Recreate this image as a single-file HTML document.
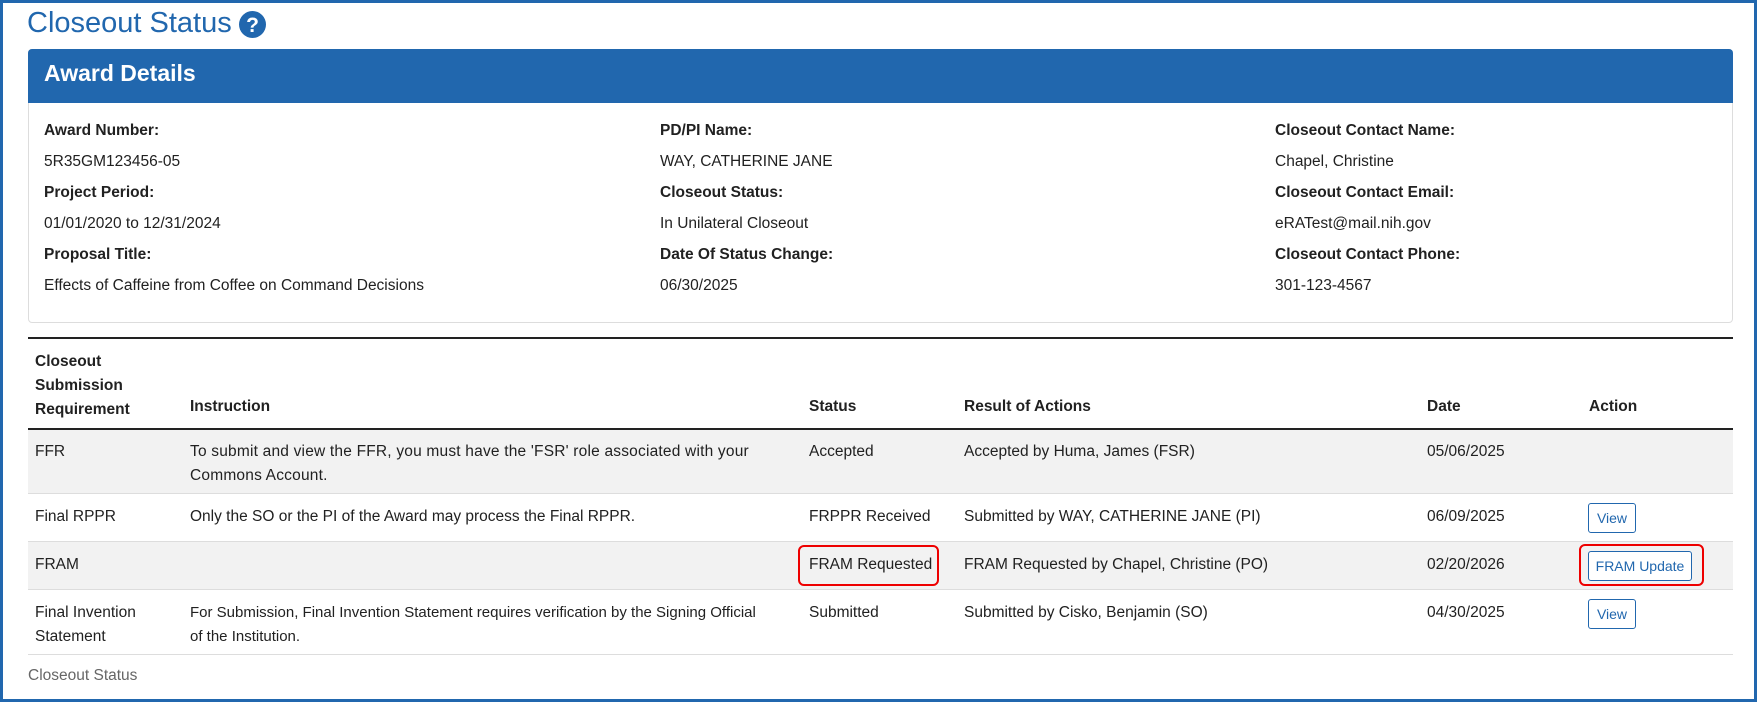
<!DOCTYPE html>
<html><head><meta charset="utf-8"><style>
*{box-sizing:border-box;margin:0;padding:0}
body{width:1757px;height:702px;overflow:hidden;background:#fff;font-family:"Liberation Sans",sans-serif;color:#212121;font-size:15.5px;position:relative}
.frame{position:absolute;left:0;top:0;width:1757px;height:702px;border:3px solid #2167ae}
.a{position:absolute;white-space:nowrap}
.b{font-weight:bold}
.row{position:absolute;left:28px;width:1705px}
.btn{position:absolute;border:1px solid #2167ae;border-radius:3px;color:#2167ae;font-size:14px;text-align:center;background:#fff}
.red{position:absolute;border:2.5px solid #e00;border-radius:6px}
</style></head><body>
<div class="frame"></div>
<div class="a" style="left:27px;top:7px;font-size:29px;color:#2167ae">Closeout Status</div>
<svg class="a" style="left:239px;top:11px" width="27" height="27" viewBox="0 0 27 27"><circle cx="13.5" cy="13.5" r="13.5" fill="#2167ae"/><text x="13.5" y="21" text-anchor="middle" font-family="Liberation Sans" font-weight="bold" font-size="21" fill="#fff">?</text></svg>
<div class="a" style="left:28px;top:49px;width:1705px;height:274px;border:1px solid #ddd;border-radius:4px"></div>
<div class="a" style="left:28px;top:49px;width:1705px;height:54px;background:#2167ae;border-radius:4px 4px 0 0"></div>
<div class="a b" style="left:44px;top:60px;font-size:23px;color:#fff">Award Details</div>

<div class="a b" style="left:44px;top:122px">Award Number:</div>
<div class="a" style="left:44px;top:153px">5R35GM123456-05</div>
<div class="a b" style="left:44px;top:184px">Project Period:</div>
<div class="a" style="left:44px;top:215px">01/01/2020 to 12/31/2024</div>
<div class="a b" style="left:44px;top:246px">Proposal Title:</div>
<div class="a" style="left:44px;top:277px">Effects of Caffeine from Coffee on Command Decisions</div>

<div class="a b" style="left:660px;top:122px">PD/PI Name:</div>
<div class="a" style="left:660px;top:153px">WAY, CATHERINE JANE</div>
<div class="a b" style="left:660px;top:184px">Closeout Status:</div>
<div class="a" style="left:660px;top:215px">In Unilateral Closeout</div>
<div class="a b" style="left:660px;top:246px">Date Of Status Change:</div>
<div class="a" style="left:660px;top:277px">06/30/2025</div>

<div class="a b" style="left:1275px;top:122px">Closeout Contact Name:</div>
<div class="a" style="left:1275px;top:153px">Chapel, Christine</div>
<div class="a b" style="left:1275px;top:184px">Closeout Contact Email:</div>
<div class="a" style="left:1275px;top:215px">eRATest@mail.nih.gov</div>
<div class="a b" style="left:1275px;top:246px">Closeout Contact Phone:</div>
<div class="a" style="left:1275px;top:277px">301-123-4567</div>

<div class="row" style="top:337px;height:2px;background:#222"></div>
<div class="a b" style="left:35px;top:350px;line-height:24px">Closeout<br>Submission<br>Requirement</div>
<div class="a b" style="left:190px;top:398px">Instruction</div>
<div class="a b" style="left:809px;top:398px">Status</div>
<div class="a b" style="left:964px;top:398px">Result of Actions</div>
<div class="a b" style="left:1427px;top:398px">Date</div>
<div class="a b" style="left:1589px;top:398px">Action</div>
<div class="row" style="top:428px;height:2px;background:#222"></div>

<div class="row" style="top:430px;height:64px;background:#f2f2f2;border-bottom:1px solid #ddd"></div>
<div class="row" style="top:494px;height:48px;border-bottom:1px solid #ddd"></div>
<div class="row" style="top:542px;height:48px;background:#f2f2f2;border-bottom:1px solid #ddd"></div>
<div class="row" style="top:590px;height:65px;border-bottom:1px solid #ddd"></div>

<div class="a" style="left:35px;top:440px;line-height:24px">FFR</div>
<div class="a" style="left:190px;top:440px;line-height:24px;letter-spacing:0.2px">To submit and view the FFR, you must have the 'FSR' role associated with your<br>Commons Account.</div>
<div class="a" style="left:809px;top:440px;line-height:24px">Accepted</div>
<div class="a" style="left:964px;top:440px;line-height:24px">Accepted by Huma, James (FSR)</div>
<div class="a" style="left:1427px;top:440px;line-height:24px">05/06/2025</div>

<div class="a" style="left:35px;top:505px;line-height:24px">Final RPPR</div>
<div class="a" style="left:190px;top:505px;line-height:24px">Only the SO or the PI of the Award may process the Final RPPR.</div>
<div class="a" style="left:809px;top:505px;line-height:24px">FRPPR Received</div>
<div class="a" style="left:964px;top:505px;line-height:24px">Submitted by WAY, CATHERINE JANE (PI)</div>
<div class="a" style="left:1427px;top:505px;line-height:24px">06/09/2025</div>
<div class="btn" style="left:1588px;top:503px;width:48px;height:30px;line-height:28px">View</div>

<div class="a" style="left:35px;top:553px;line-height:24px">FRAM</div>
<div class="a" style="left:809px;top:553px;line-height:24px">FRAM Requested</div>
<div class="a" style="left:964px;top:553px;line-height:24px">FRAM Requested by Chapel, Christine (PO)</div>
<div class="a" style="left:1427px;top:553px;line-height:24px">02/20/2026</div>
<div class="btn" style="left:1588px;top:551px;width:104px;height:30px;line-height:28px">FRAM Update</div>
<div class="red" style="left:798px;top:545px;width:141px;height:41px"></div>
<div class="red" style="left:1579px;top:544px;width:125px;height:42px"></div>

<div class="a" style="left:35px;top:601px;line-height:24px">Final Invention<br>Statement</div>
<div class="a" style="left:190px;top:601px;line-height:24px;font-size:15px">For Submission, Final Invention Statement requires verification by the Signing Official<br>of the Institution.</div>
<div class="a" style="left:809px;top:601px;line-height:24px">Submitted</div>
<div class="a" style="left:964px;top:601px;line-height:24px">Submitted by Cisko, Benjamin (SO)</div>
<div class="a" style="left:1427px;top:601px;line-height:24px">04/30/2025</div>
<div class="btn" style="left:1588px;top:599px;width:48px;height:30px;line-height:28px">View</div>

<div class="a" style="left:28px;top:667px;color:#666">Closeout Status</div>
</body></html>
